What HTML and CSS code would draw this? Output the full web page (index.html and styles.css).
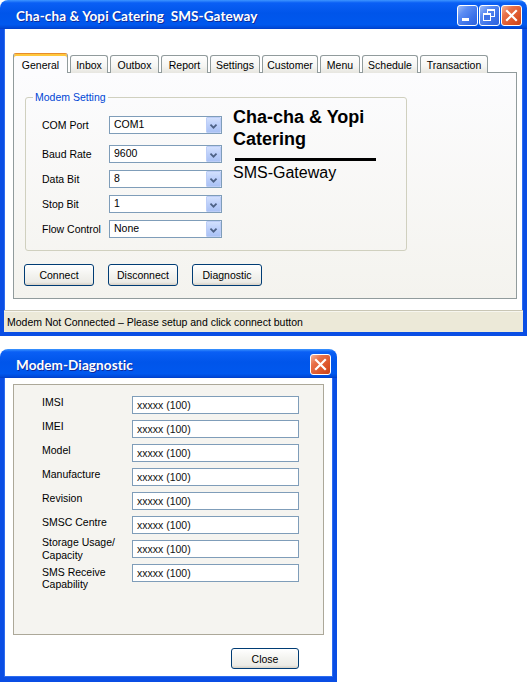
FILE: index.html
```html
<!DOCTYPE html>
<html>
<head>
<meta charset="utf-8">
<title>SMS-Gateway</title>
<link rel="stylesheet" href="styles.css">
</head>
<body>
<div class="page">
  <div class="win win-main">
    <div class="titlebar">
      <span class="title">Cha-cha &amp; Yopi Catering  SMS-Gateway</span>
      <div class="controls">
        <span class="ctl ctl-blue"><svg width="19" height="19" viewBox="0 0 19 19"><rect x="4" y="12" width="7" height="3" fill="#fff"/></svg></span>
        <span class="ctl ctl-blue"><svg width="19" height="19" viewBox="0 0 19 19"><rect x="7.5" y="3.5" width="7" height="7" fill="none" stroke="#fff"/><rect x="7" y="3" width="8" height="2" fill="#fff"/><rect x="3.5" y="7.5" width="7" height="7" fill="#3f72e6" stroke="#fff"/><rect x="3" y="7" width="8" height="2" fill="#fff"/></svg></span>
        <span class="ctl ctl-red"><svg width="19" height="19" viewBox="0 0 19 19"><path d="M5 5 L14 14 M14 5 L5 14" stroke="#fff" stroke-width="2.2" stroke-linecap="square"/></svg></span>
      </div>
    </div>
    <div class="win-body main-body">
      <div class="tabs">
        <span class="tab active w-general">General</span>
        <span class="tab w-inbox">Inbox</span>
        <span class="tab w-outbox">Outbox</span>
        <span class="tab w-report">Report</span>
        <span class="tab w-settings">Settings</span>
        <span class="tab w-customer">Customer</span>
        <span class="tab w-menu">Menu</span>
        <span class="tab w-schedule">Schedule</span>
        <span class="tab w-transaction">Transaction</span>
      </div>
      <div class="tab-panel">
        <fieldset class="group">
          <legend>Modem Setting</legend>
          <div class="group-inner">
            <div class="form">
              <div class="row row-first"><span class="lbl">COM Port</span><div class="combo"><span class="combo-val">COM1</span><span class="combo-btn"><svg width="15" height="16" viewBox="0 0 15 16"><path d="M4 6.5 L7.5 10 L11 6.5" fill="none" stroke="#4d6185" stroke-width="2"/></svg></span></div></div>
              <div class="row"><span class="lbl">Baud Rate</span><div class="combo"><span class="combo-val">9600</span><span class="combo-btn"><svg width="15" height="16" viewBox="0 0 15 16"><path d="M4 6.5 L7.5 10 L11 6.5" fill="none" stroke="#4d6185" stroke-width="2"/></svg></span></div></div>
              <div class="row"><span class="lbl">Data Bit</span><div class="combo"><span class="combo-val">8</span><span class="combo-btn"><svg width="15" height="16" viewBox="0 0 15 16"><path d="M4 6.5 L7.5 10 L11 6.5" fill="none" stroke="#4d6185" stroke-width="2"/></svg></span></div></div>
              <div class="row"><span class="lbl">Stop Bit</span><div class="combo"><span class="combo-val">1</span><span class="combo-btn"><svg width="15" height="16" viewBox="0 0 15 16"><path d="M4 6.5 L7.5 10 L11 6.5" fill="none" stroke="#4d6185" stroke-width="2"/></svg></span></div></div>
              <div class="row"><span class="lbl">Flow Control</span><div class="combo"><span class="combo-val">None</span><span class="combo-btn"><svg width="15" height="16" viewBox="0 0 15 16"><path d="M4 6.5 L7.5 10 L11 6.5" fill="none" stroke="#4d6185" stroke-width="2"/></svg></span></div></div>
            </div>
            <div class="brand">
              <div class="brand-name">Cha-cha &amp; Yopi Catering</div>
              <div class="brand-rule"></div>
              <div class="brand-sub">SMS-Gateway</div>
            </div>
          </div>
        </fieldset>
        <div class="actions">
          <span class="btn">Connect</span>
          <span class="btn">Disconnect</span>
          <span class="btn">Diagnostic</span>
        </div>
      </div>
      <div class="statusbar">Modem Not Connected – Please setup and click connect button</div>
    </div>
  </div>

  <div class="win win-dialog">
    <div class="titlebar dialog-title">
      <span class="title">Modem-Diagnostic</span>
      <div class="controls">
        <span class="ctl ctl-red"><svg width="19" height="19" viewBox="0 0 19 19"><path d="M5 5 L14 14 M14 5 L5 14" stroke="#fff" stroke-width="2.2" stroke-linecap="square"/></svg></span>
      </div>
    </div>
    <div class="win-body dialog-body">
      <div class="diag-panel">
        <div class="drow"><span class="dlbl">IMSI</span><span class="field">xxxxx (100)</span></div>
        <div class="drow"><span class="dlbl">IMEI</span><span class="field">xxxxx (100)</span></div>
        <div class="drow"><span class="dlbl">Model</span><span class="field">xxxxx (100)</span></div>
        <div class="drow"><span class="dlbl">Manufacture</span><span class="field">xxxxx (100)</span></div>
        <div class="drow"><span class="dlbl">Revision</span><span class="field">xxxxx (100)</span></div>
        <div class="drow"><span class="dlbl">SMSC Centre</span><span class="field">xxxxx (100)</span></div>
        <div class="drow"><span class="dlbl two">Storage Usage/<br>Capacity</span><span class="field">xxxxx (100)</span></div>
        <div class="drow"><span class="dlbl two-low">SMS Receive<br>Capability</span><span class="field">xxxxx (100)</span></div>
      </div>
      <div class="dialog-footer">
        <span class="btn btn-close">Close</span>
      </div>
    </div>
  </div>
</div>
</body>
</html>
```

FILE: styles.css
```css
html, body {
  margin: 0;
  padding: 0;
  background: #fff;
}
body {
  font-family: "Liberation Sans", Arial, sans-serif;
  font-size: 10.5px;
  color: #000;
}
.page {
  display: flex;
  flex-direction: column;
  align-items: flex-start;
  gap: 13px;
}
.win {
  display: flex;
  flex-direction: column;
}
.win-main { width: 527px; }
.win-dialog { width: 337px; }

.titlebar {
  height: 29px;
  box-sizing: border-box;
  border-radius: 8px 8px 0 0;
  background: linear-gradient(180deg, #3d95ff 0%, #0a5ff5 10%, #0055ea 45%, #0058ee 85%, #004ad9 95%, #003dc8 100%);
  display: flex;
  align-items: center;
  justify-content: space-between;
  padding: 2px 5px 0 16px;
}
.dialog-title { padding-right: 6px; }
.title {
  color: #fff;
  font-family: Lato, "DejaVu Sans", sans-serif;
  font-weight: 700;
  font-size: 13.5px;
  white-space: pre;
  text-shadow: 1px 1px 0 #0f2a9a;
  letter-spacing: 0.1px;
}
.controls {
  display: flex;
  gap: 1px;
}
.ctl {
  width: 21px;
  height: 21px;
  box-sizing: border-box;
  border: 1px solid #fff;
  border-radius: 3px;
  display: flex;
  align-items: center;
  justify-content: center;
}
.ctl-blue {
  background: linear-gradient(135deg, #9fbcf7 0%, #5c8df3 30%, #3a70e8 70%, #2e62dc 100%);
}
.ctl-red {
  background: linear-gradient(135deg, #f3b59c 0%, #e8714a 30%, #dc5428 70%, #c9431a 100%);
}

.win-body {
  border: 4px solid #0a4ee4;
  border-top: 0;
  background: #fff;
  box-shadow: inset 1px 0 #2c6cf0, inset -1px 0 #2c6cf0, inset 0 -1px #2c6cf0;
  display: flex;
  flex-direction: column;
}
.main-body {
  padding-top: 24px;
}

/* Tabs */
.tabs {
  display: flex;
  align-items: flex-end;
  gap: 2px;
  margin-left: 9px;
  height: 20px;
  margin-bottom: -1px;
  position: relative;
  z-index: 1;
}
.tab {
  box-sizing: border-box;
  height: 18px;
  border: 1px solid #919b9c;
  border-bottom: 0;
  border-radius: 3px 3px 0 0;
  background: linear-gradient(180deg, #ffffff 0%, #f5f5f2 60%, #e7e6e0 100%);
  display: flex;
  align-items: center;
  justify-content: center;
  font-size: 10.5px;
  padding-top: 1px;
}
.tab.active {
  height: 20px;
  background: #fcfcfe;
  border-top: 1px solid #e68b2c;
  box-shadow: inset 0 2px #ffc73c;
  padding-top: 2px;
}
.w-general { width: 55px; }
.w-inbox { width: 38px; }
.w-outbox { width: 49px; }
.w-report { width: 47px; }
.w-settings { width: 50px; }
.w-customer { width: 56px; }
.w-menu { width: 40px; }
.w-schedule { width: 56px; }
.w-transaction { width: 68px; }

.tab-panel {
  box-sizing: border-box;
  width: 504px;
  height: 227px;
  margin-left: 9px;
  border: 1px solid #919b9c;
  background: linear-gradient(180deg, #fcfcfe 0%, #f4f3ee 100%);
  padding: 18px 0 0 11px;
}

/* Group box */
.group {
  box-sizing: border-box;
  width: 382px;
  margin: 0;
  border: 1px solid #d0d0bf;
  border-radius: 3px;
  padding: 13px 0 12px 16px;
}
.group legend {
  font-size: 10.5px;
  line-height: 12px;
  color: #0046d5;
  padding: 0 2px;
  margin-left: -9px;
}
.group-inner {
  display: flex;
  align-items: flex-start;
}
.form {
  display: flex;
  flex-direction: column;
  gap: 7px;
}
.row {
  display: flex;
  align-items: center;
  height: 18px;
}
.row-first { margin-bottom: 4px; }
.lbl {
  width: 67px;
  font-size: 10.5px;
}
.combo {
  box-sizing: border-box;
  width: 113px;
  height: 18px;
  border: 1px solid #7f9db9;
  background: #fff;
  display: flex;
  align-items: stretch;
}
.combo-val {
  flex: 1;
  padding-left: 4px;
  font-size: 10.5px;
  line-height: 14px;
}
.combo-btn {
  width: 15px;
  margin: 0;
  box-sizing: border-box;
  border: 1px solid #bccdf7;
  border-radius: 1px;
  background: linear-gradient(180deg, #d2e0fd 0%, #bccffa 50%, #aac2f5 100%);
  display: flex;
}
.brand {
  margin-left: 11px;
  margin-top: -10px;
  width: 160px;
}
.brand-name {
  font-weight: 700;
  font-size: 18px;
  line-height: 22px;
}
.brand-rule {
  width: 141px;
  height: 3px;
  background: #000;
  margin: 8px 0 0 2px;
}
.brand-sub {
  font-size: 16px;
  line-height: 18px;
  margin-top: 3px;
}

/* Buttons */
.actions {
  display: flex;
  gap: 14px;
  margin-top: 13px;
  margin-left: -1px;
}
.btn {
  box-sizing: border-box;
  width: 70px;
  height: 22px;
  border: 1px solid #003c74;
  border-radius: 3px;
  background: linear-gradient(180deg, #ffffff 0%, #f3f3ef 50%, #ecebe6 86%, #d6d0c5 100%);
  display: flex;
  align-items: center;
  justify-content: center;
  font-size: 10.5px;
}

/* Status bar */
.statusbar {
  margin-top: 11px;
  height: 22px;
  box-sizing: border-box;
  background: #ece9d8;
  border-top: 1px solid #c9c6b5;
  box-shadow: inset 0 1px #f7f6ef;
  display: flex;
  align-items: center;
  padding-left: 3px;
  font-size: 10.5px;
}

/* Dialog */
.dialog-body {
  padding: 6px 0 8px 0;
  border-bottom-width: 5px;
}
.diag-panel {
  box-sizing: border-box;
  width: 311px;
  height: 251px;
  margin-left: 9px;
  border: 1px solid #aca899;
  background: #f5f4f0;
  padding: 11px 0 0 28px;
  display: flex;
  flex-direction: column;
  gap: 6px;
}
.drow {
  display: flex;
  align-items: flex-start;
  height: 18px;
}
.dlbl {
  width: 90px;
  font-size: 10.5px;
  line-height: 14px;
  margin-top: -1px;
}
.dlbl.two {
  line-height: 13px;
  margin-top: -4px;
}
.dlbl.two-low {
  line-height: 12px;
  margin-top: 2px;
}
.field {
  box-sizing: border-box;
  width: 167px;
  height: 18px;
  border: 1px solid #7f9db9;
  background: #fff;
  display: flex;
  align-items: center;
  padding-left: 4px;
  font-size: 10.5px;
  color: #111;
}
.dialog-footer {
  display: flex;
  justify-content: flex-end;
  padding-right: 34px;
  margin-top: 13px;
}
.btn-close {
  width: 68px;
  height: 21px;
}
```
